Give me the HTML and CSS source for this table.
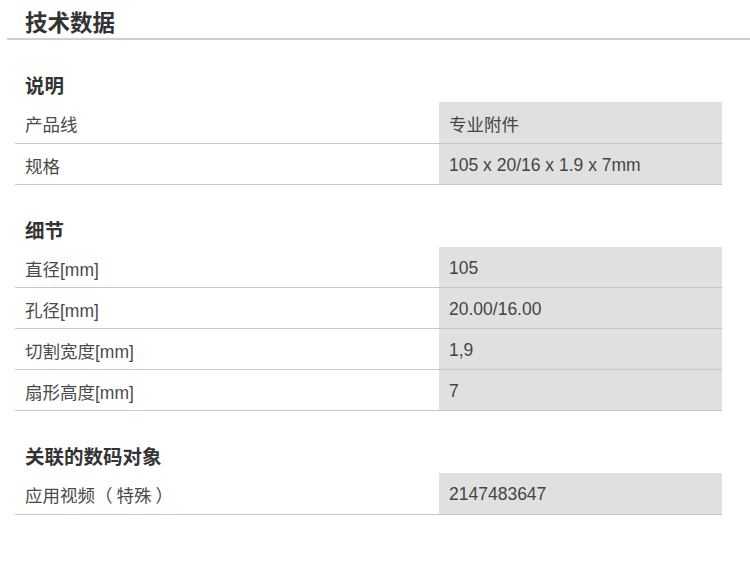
FILE: index.html
```html
<!DOCTYPE html>
<html lang="zh">
<head>
<meta charset="utf-8">
<title>技术数据</title>
<link rel="stylesheet" href="styles.css">
</head>
<body>
<div class="page">
  <h1 class="title">技术数据</h1>
  <section class="group">
    <h2 class="group-title">说明</h2>
    <table class="spec">
      <tr><td class="label">产品线</td><td class="value">专业附件</td></tr>
      <tr><td class="label">规格</td><td class="value">105 x 20/16 x 1.9 x 7mm</td></tr>
    </table>
  </section>
  <section class="group">
    <h2 class="group-title">细节</h2>
    <table class="spec">
      <tr><td class="label">直径[mm]</td><td class="value">105</td></tr>
      <tr><td class="label">孔径[mm]</td><td class="value">20.00/16.00</td></tr>
      <tr><td class="label">切割宽度[mm]</td><td class="value">1,9</td></tr>
      <tr><td class="label">扇形高度[mm]</td><td class="value">7</td></tr>
    </table>
  </section>
  <section class="group">
    <h2 class="group-title">关联的数码对象</h2>
    <table class="spec">
      <tr><td class="label">应用视频<span class="paren-open">（</span>特殊<span class="paren-close">）</span></td><td class="value">2147483647</td></tr>
    </table>
  </section>
</div>
</body>
</html>
```
FILE: styles.css
```css
html, body {
  margin: 0;
  padding: 0;
  background: #ffffff;
}
body {
  font-family: "Liberation Sans", "Noto Sans CJK SC", sans-serif;
  color: #444;
}
.page {
  width: 750px;
}
.title {
  margin: 0 0 0 7px;
  padding: 10px 0 0 18px;
  height: 28px;
  font-size: 22.5px;
  line-height: 28px;
  font-weight: bold;
  color: #333;
  border-bottom: 2px solid #cfcfcf;
}
.group {
  padding: 34px 0 0 15px;
}
.group-title {
  margin: 0 0 4px 0;
  padding-left: 10px;
  font-size: 19.5px;
  line-height: 24px;
  font-weight: bold;
  color: #333;
}
.spec {
  width: 707px;
  border-collapse: collapse;
}
.spec td {
  box-sizing: border-box;
  height: 41px;
  padding: 3px 10px 0 10px;
  font-size: 17.5px;
  border-bottom: 1px solid #c6c6c6;
  vertical-align: middle;
}
.spec .label {
  width: 424px;
  color: #4a4a4a;
}
.spec .value {
  background: #e0e0e0;
  color: #454545;
}
.paren-open {
  margin-right: 4px;
}
.paren-close {
  margin-left: 4px;
}
```
